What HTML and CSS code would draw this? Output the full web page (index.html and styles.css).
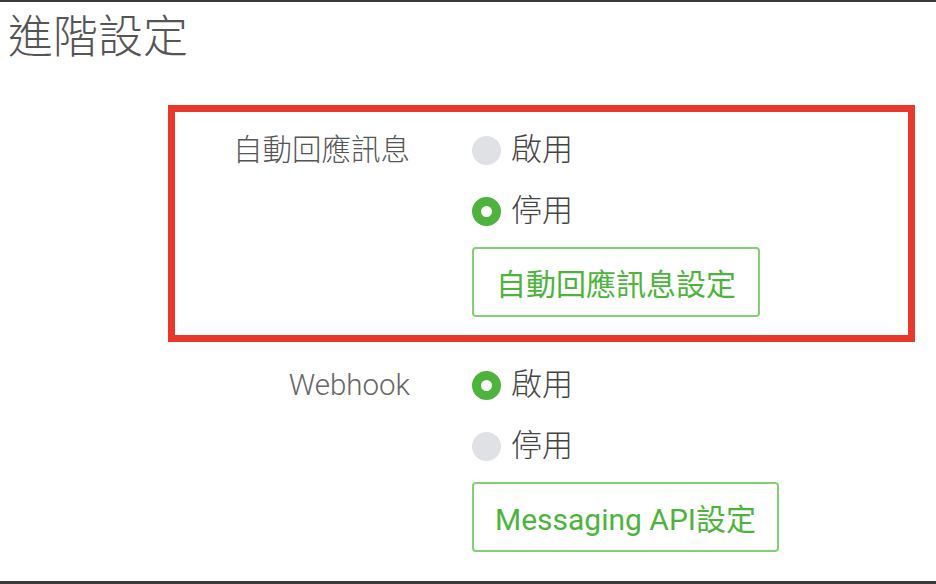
FILE: index.html
```html
<!DOCTYPE html>
<html lang="zh-Hant">
<head>
<meta charset="utf-8">
<title>進階設定</title>
<link rel="stylesheet" href="styles.css">
</head>
<body>
<div class="page">
  <h1 class="title">進階設定</h1>
  <section class="setting setting--highlight">
    <div class="setting__label">自動回應訊息</div>
    <div class="setting__options">
      <label class="radio"><span class="radio__dot"></span><span class="radio__text">啟用</span></label>
      <label class="radio"><span class="radio__dot radio__dot--on"></span><span class="radio__text">停用</span></label>
      <button class="btn" type="button">自動回應訊息設定</button>
    </div>
  </section>
  <section class="setting setting--plain">
    <div class="setting__label setting__label--latin">Webhook</div>
    <div class="setting__options">
      <label class="radio"><span class="radio__dot radio__dot--on"></span><span class="radio__text">啟用</span></label>
      <label class="radio"><span class="radio__dot"></span><span class="radio__text">停用</span></label>
      <button class="btn btn--wide" type="button">Messaging API設定</button>
    </div>
  </section>
</div>
</body>
</html>
```

FILE: styles.css
```css
* { box-sizing: border-box; }
html, body { margin: 0; padding: 0; background: #fff; }
body {
  font-family: Roboto, "Noto Sans CJK TC", "Noto Sans", sans-serif;
  color: #444;
}
.page {
  height: 584px;
  border-top: 2px solid #3a3a3a;
  border-bottom: 3px solid #3a3a3a;
  padding-top: 10px;
  overflow: hidden;
}
.title {
  margin: 0;
  padding-left: 8px;
  font-size: 45px;
  line-height: 52px;
  font-weight: 300;
  color: #555;
}
.setting {
  margin-left: 168px;
  width: 747px;
  border: 7px solid transparent;
  display: grid;
  grid-template-columns: 236px 1fr;
  column-gap: 61px;
}
.setting--highlight {
  margin-top: 41px;
  border-color: #e8382b;
  padding: 15px 0 18px;
}
.setting--plain {
  padding: 13px 0 0;
}
.setting__label {
  text-align: right;
  font-size: 29.5px;
  line-height: 46px;
  font-weight: 300;
  color: #555;
  padding-right: 1px;
}
.setting__label--latin {
  font-size: 29.5px;
  color: #666;
}
.setting__options {
  display: flex;
  flex-direction: column;
  align-items: flex-start;
  gap: 15px;
}
.radio {
  display: flex;
  align-items: center;
  gap: 10px;
  height: 46px;
}
.radio__dot {
  width: 29px;
  height: 29px;
  border-radius: 50%;
  background: #dfe1e5;
}
.radio__dot--on {
  background: #fff;
  border: 9px solid #4db33d;
}
.radio__text {
  font-size: 31px;
  line-height: 46px;
  font-weight: 300;
  color: #444;
}
.btn {
  margin-top: -2px;
  width: 288px;
  height: 70px;
  border: 2px solid #7fd26f;
  border-radius: 4px;
  background: #fff;
  color: #4cb43c;
  font-family: Roboto, "Noto Sans CJK TC", sans-serif;
  font-size: 30px;
  font-weight: 400;
  padding: 0 16px;
  cursor: pointer;
}
.btn--wide {
  width: 307px;
}
```
